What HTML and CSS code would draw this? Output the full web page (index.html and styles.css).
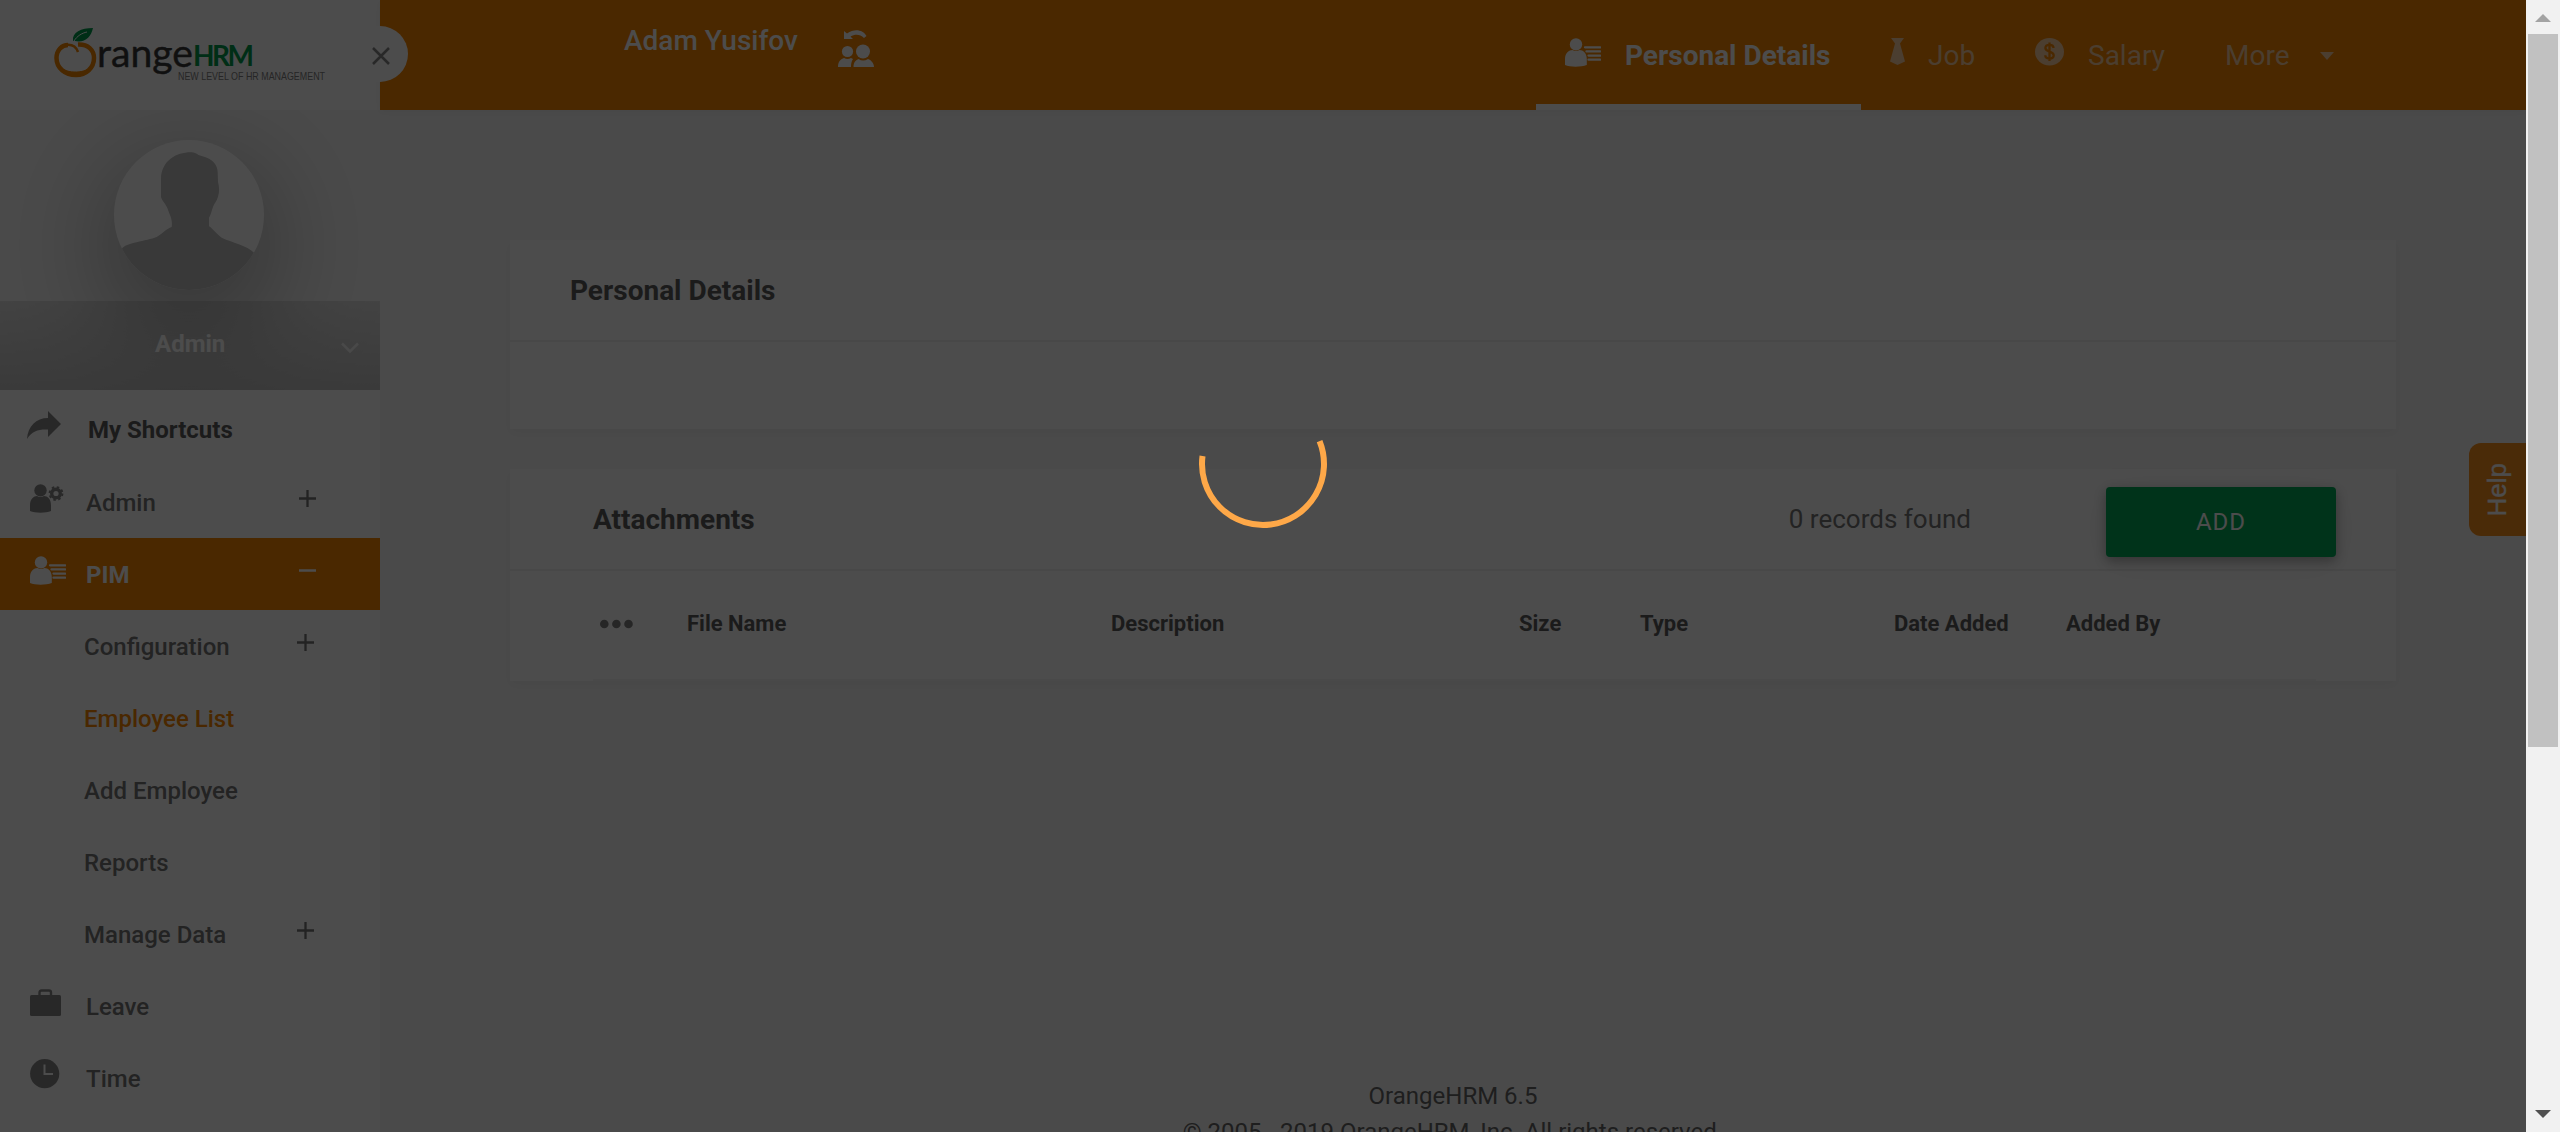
FILE: index.html
```html
<!DOCTYPE html>
<html lang="en">
<head>
<meta charset="utf-8">
<title>OrangeHRM</title>
<link rel="stylesheet" href="styles.css">
</head>
<body>
<svg width="0" height="0" class="defs">
  <defs>
    <symbol id="user-lines" viewBox="0 0 36 29">
      <circle cx="11" cy="6.4" r="6.2"/>
      <path d="M0 27V21C0 15 4 12 7.500 12C9.500 13.200 12.500 13.200 14.500 12C18 12 21.800 15 21.800 21V27C16 29.200 5 29.200 0 27Z"/>
      <path d="M20 9.300H35.200M21.500 13.400H35.200M23.500 17.600H35.200M23.500 21.700H35.200" fill="none" stroke="currentColor" stroke-width="2.300" stroke-linecap="round"/>
    </symbol>
    <symbol id="user-gear" viewBox="0 0 36 29">
      <circle cx="10.500" cy="6.400" r="6.200"/>
      <path d="M0 27V21C0 15 4 12 7 12C9 13.200 12 13.200 14 12C17.500 12 21 15 21 21V27C16 29.200 5 29.200 0 27Z"/>
      <circle cx="26" cy="9.500" r="4.300" fill="none" stroke="currentColor" stroke-width="3.400"/>
      <circle cx="26" cy="9.500" r="6.400" fill="none" stroke="currentColor" stroke-width="2" stroke-dasharray="2.500 2.526"/>
    </symbol>
    <symbol id="plus" viewBox="0 0 17 17"><path d="M0 8.500H17M8.500 0V17" fill="none" stroke="currentColor" stroke-width="2.300"/></symbol>
    <symbol id="minus" viewBox="0 0 17 17"><path d="M0 8.500H17" fill="none" stroke="currentColor" stroke-width="2.500"/></symbol>
  </defs>
</svg>
<div class="window">
  <div class="app">
    <aside class="sidebar">
      <div class="brand">
        <svg class="logo" width="276" height="60" viewBox="0 0 276 60">
          <path d="M24 16.500C34 16 40 22 40 30C40 40 32 47 22 47C11 47 2.500 40 2.500 30C2.500 22 8 17 14 17" fill="none" stroke="#f58500" stroke-width="4.500"/>
          <path d="M11 17C17 16 22 18 24 24" fill="none" stroke="#f58500" stroke-width="2.500"/>
          <path d="M5 38C12 51 32 50 38 38C34 45 12 47 5 38Z" fill="#f58500" stroke="#f58500"/>
          <path d="M19 13C18 4 27 0 39 0C37 9 31 15 21 13Z" fill="#009a4c"/>
          <path d="M20 13C23 8 28 5 33 4" fill="none" stroke="#fff" stroke-width="1"/>
          <text x="43" y="39" class="logo-name" textLength="96" lengthAdjust="spacingAndGlyphs">range</text>
          <text x="139" y="38" class="logo-hrm" textLength="61" lengthAdjust="spacing">HRM</text>
          <text x="124" y="52" class="logo-tag" textLength="147" lengthAdjust="spacingAndGlyphs">NEW LEVEL OF HR MANAGEMENT</text>
        </svg>
      </div>
      <div class="profile">
        <div class="photo">
          <svg width="150" height="150" viewBox="342 419 450 450"><path fill="#bebebe" d="M366 745C375 728 440 722 470 710C490 698 500 685 515 680C519 655 507 640 503 625C497 610 488 605 483 590V535C485 480 530 455 575 456C592 458 592 465 605 467C640 475 652 495 653 515L654 545C660 565 658 590 645 608C637 618 635 640 627 652V678C640 686 650 702 665 712C700 728 740 735 762 757V900H366Z"/></svg>
        </div>
        <div class="account">
          <span>Admin</span>
          <svg class="chevron" width="18" height="12" viewBox="0 0 18 12"><path d="M1 1.500L9 9.500L17 1.500" fill="none" stroke="#fff" stroke-width="2.600"/></svg>
        </div>
      </div>
      <nav class="menu">
        <a class="item shortcuts"><svg class="icon" width="34" height="28" viewBox="0 0 34 28"><path d="M0 28C1 15 9 7 21 7V0L34 13L21 26V18.500C12 18 5 20 0 28Z"/></svg><span>My Shortcuts</span></a>
        <a class="item"><svg class="icon" width="36" height="29"><use href="#user-gear"/></svg><span>Admin</span><svg class="toggle" width="17" height="17"><use href="#plus"/></svg></a>
        <a class="item active"><svg class="icon" width="36" height="29"><use href="#user-lines"/></svg><span>PIM</span><svg class="toggle" width="17" height="17"><use href="#minus"/></svg></a>
        <a class="item sub"><span>Configuration</span><svg class="toggle" width="17" height="17"><use href="#plus"/></svg></a>
        <a class="item sub current"><span>Employee List</span></a>
        <a class="item sub"><span>Add Employee</span></a>
        <a class="item sub"><span>Reports</span></a>
        <a class="item sub"><span>Manage Data</span><svg class="toggle" width="17" height="17"><use href="#plus"/></svg></a>
        <a class="item"><svg class="icon" width="31" height="27" viewBox="0 0 31 27"><rect y="6" width="31" height="21" rx="1.500"/><path d="M9.500 7V3.500Q9.500 1.500 11.500 1.500H19Q21 1.500 21 3.500V7" fill="none" stroke="currentColor" stroke-width="2.400"/></svg><span>Leave</span></a>
        <a class="item"><svg class="icon" width="30" height="30" viewBox="0 0 30 30"><circle cx="14.700" cy="14.700" r="14.600"/><path d="M14.500 5.500V15H23" fill="none" stroke="#fff" stroke-width="2"/></svg><span>Time</span></a>
      </nav>
    </aside>

    <div class="main">
      <header class="topbar">
        <div class="employee">Adam Yusifov</div>
        <svg class="switch" width="36" height="38" viewBox="0 0 36 38"><circle cx="9.500" cy="21.500" r="5.600"/><path d="M0 37C0 31 3 29 6 28Q9.500 30 13 28L15 29C13.500 31 13 34 13 37Z"/><circle cx="25" cy="21.500" r="7"/><path d="M15.500 37C15.500 32 18 30 20.500 29Q25 32 30 29C33 30 36 33 36 37Z"/><path d="M6 1L9 3.500C17-2 25 0 28.500 6L26 8C22 4 17 4 12.500 6.500L15 9H6Z"/></svg>
        <nav class="tabs">
          <a class="tab selected"><svg width="36" height="29"><use href="#user-lines"/></svg><span>Personal Details</span></a>
          <a class="tab job"><svg width="15" height="27" viewBox="0 0 15 27"><path d="M1 0H14L10 5.500L15 23.500L7.500 27L0 23.500L5 5.500Z"/></svg><span>Job</span></a>
          <a class="tab salary"><svg width="29" height="28" viewBox="0 0 29 28"><ellipse cx="14.500" cy="13.800" rx="14.500" ry="13.800"/><path d="M18.500 10C18.500 7.500 16.500 6.800 14.500 6.800C12 6.800 10.400 8 10.400 10C10.400 14.600 18.700 12.600 18.700 17.200C18.700 19.500 17 20.500 14.500 20.500C12 20.500 10.300 19.500 10.300 17.300M14.500 4.500V23" fill="none" stroke="#f78600" stroke-width="2.300"/></svg><span>Salary</span></a>
          <a class="tab more"><span>More</span><svg width="14" height="8" viewBox="0 0 14 8"><path d="M0 0H14L7 8Z"/></svg></a>
        </nav>
      </header>
      <main class="content">
        <section class="card">
          <h2 class="card-head">Personal Details</h2>
          <div class="card-body"></div>
        </section>
        <section class="card attachments">
          <div class="card-head">
            <h2>Attachments</h2>
            <span class="records">0 records found</span>
            <button class="add">ADD</button>
          </div>
          <div class="table-head">
            <svg width="34" height="10" viewBox="0 0 34 10"><circle cx="4.300" cy="5" r="4.300"/><circle cx="16.400" cy="5" r="4.300"/><circle cx="28.500" cy="5" r="4.300"/></svg>
            <span>File Name</span><span>Description</span><span>Size</span><span>Type</span><span>Date Added</span><span>Added By</span>
          </div>
        </section>
      </main>
      <footer class="footer">OrangeHRM 6.5<br>© 2005 - 2019 OrangeHRM, Inc. All rights reserved.</footer>
    </div>

    <button class="close"><svg width="18" height="18" viewBox="0 0 18 18"><path d="M1 1L17 17M17 1L1 17" fill="none" stroke="#888" stroke-width="2.500"/></svg></button>
    <div class="help"><span>Help</span></div>
    <div class="overlay">
      <svg width="128" height="128" viewBox="-64 -64 128 128"><path d="M-60.480 -8A61 61 0 1 0 56.560 -22.850" fill="none" stroke="#fea848" stroke-width="6"/></svg>
    </div>
  </div>
  <div class="scrollbar">
    <svg width="16" height="8" viewBox="0 0 16 8"><path d="M0 8H16L8 0Z" fill="#a3a3a3"/></svg>
    <div class="thumb"></div>
    <svg class="down" width="16" height="8" viewBox="0 0 16 8"><path d="M0 0H16L8 8Z" fill="#505050"/></svg>
  </div>
</div>
</body>
</html>
```
FILE: styles.css
```css
* { box-sizing: border-box; }
body { margin: 0; font-family: Roboto, "Liberation Sans", sans-serif; overflow: hidden; }
h2 { margin: 0; font: inherit; }
button { border: 0; padding: 0; font: inherit; }
svg { display: block; flex: none; fill: currentColor; overflow: visible; }
.defs { position: absolute; }

.window { display: flex; height: 1132px; overflow: hidden; }
.app { position: relative; display: flex; width: 2526px; height: 1132px; overflow: hidden; background: #f9f9f9; }

/* Sidebar */
.sidebar { width: 380px; height: 1132px; background: #fff; flex: none; }
.brand { height: 110px; padding: 28px 0 0 54px; }
.logo-name { font: 39px Lato, sans-serif; fill: #383838; stroke: #383838; stroke-width: .4; }
.logo-hrm { font: 700 28px Lato, sans-serif; fill: #009a4c; }
.logo-tag { font: 11.500px "Liberation Sans", sans-serif; fill: #808080; }
.profile { height: 280px; padding-top: 30px; overflow: hidden; background: #f9f9f9; }
.photo { width: 150px; height: 150px; margin: 0 auto 11px 114px; border-radius: 50%; background: #fff; box-shadow: 0 30px 120px rgba(0, 0, 0, .42); }
.photo svg { border-radius: 50%; overflow: hidden; }
.account { position: relative; display: flex; align-items: center; height: 89px; padding: 0 21px 3px 155px; background: linear-gradient(rgba(0, 0, 0, .1), rgba(0, 0, 0, .22)); color: #fff; font-weight: 700; font-size: 24px; }
.chevron { margin: 8px 0 0 auto; opacity: .75; }
.menu { color: #757575; font-size: 24px; font-weight: 500; }
.item { display: grid; grid-template-columns: 56px 1fr 17px; align-items: center; height: 72px; padding: 1px 64px 0 30px; }
.item > span { grid-column: 2; }
.icon { color: #888; margin-bottom: 9px; }
.toggle { margin-bottom: 8px; }
.item.shortcuts { height: 76px; padding: 3px 64px 0 27px; grid-template-columns: 61px 1fr 17px; color: #5d5d5d; font-weight: 700; }
.shortcuts .icon { margin-bottom: 10px; }
.item.active { background: #f78600; color: #fff; font-weight: 700; }
.active .icon { color: #fff; }
.item.sub { padding-right: 66px; grid-template-columns: 54px 1fr 17px; }
.item.current { color: #f78600; }

/* Header */
.main { width: 2146px; display: flex; flex-direction: column; flex: none; }
.topbar { display: flex; align-items: flex-start; height: 110px; background: #f78600; color: #fff; font-size: 28px; line-height: 34px; box-shadow: 0 2px 8px rgba(0, 0, 0, .06); }
.employee { margin: 24px 0 0 244px; width: 214px; font-weight: 500; }
.switch { margin-top: 30px; width: 36px; }
.tabs { display: flex; margin-left: 662px; color: #facfa2; }
.tab { display: flex; align-items: flex-start; height: 110px; padding-top: 38px; }
.tab span { padding-top: 1px; }
.tab svg { margin-right: 24px; }
.selected { width: 325px; padding-left: 29px; color: #fff; font-weight: 700; border-bottom: 6px solid #fff; }
.job { width: 174px; padding-left: 29px; }
.job svg { margin-right: 23px; }
.salary { width: 190px; }
.more svg { margin: 14px 0 0 30px; }

/* Cards */
.content { padding: 130px 130px 0; display: grid; gap: 40px; }
.card { background: #fff; box-shadow: 0 4px 10px rgba(0, 0, 0, .05); height: 189px; }
.card-head { display: flex; align-items: center; height: 102px; padding-left: 60px; border-bottom: 2px solid #f1f1f1; font-size: 28px; font-weight: 700; color: #5d5d5d; }
.attachments { height: 212px; }
.attachments .card-head { padding-left: 83px; padding-right: 60px; }
.records { margin: 0 135px 0 auto; color: #757575; font-size: 26px; font-weight: 400; }
.add { width: 230px; height: 70px; margin-top: 6px; border-radius: 4px; background: #00aa57; color: #fff; font-size: 24px; font-weight: 400; letter-spacing: 1px; box-shadow: 0 4px 12px rgba(0, 0, 0, .3), 0 6px 40px rgba(0, 0, 0, .06); }
.table-head { display: grid; grid-template-columns: 87px 424px 408px 121px 254px 172px 1fr; align-items: center; height: 110px; margin: 0 80px 0 83px; padding: 0 0 4px 7px; border-bottom: 2px solid #f3f3f3; color: #5d5d5d; font-size: 22px; font-weight: 700; }
.table-head svg { color: #808080; margin-top: 2px; }
.footer { margin-top: auto; height: 54px; text-align: center; color: #666; font-size: 24px; line-height: 36px; white-space: nowrap; }

/* Floating controls */
.close { position: absolute; left: 352px; top: 26px; width: 56px; height: 56px; border-radius: 50%; background: #fff; padding: 3px 0 0 20px; }
.help { position: absolute; right: 0; top: 443px; width: 57px; height: 93px; display: flex; align-items: center; justify-content: center; border-radius: 12px 0 0 12px; background: #f98f1c; color: #fff; font: 26px "Liberation Sans", sans-serif; -webkit-text-stroke: .4px #fff; }
.help span { writing-mode: vertical-rl; transform: rotate(180deg); }
.overlay { position: absolute; inset: 0; display: flex; justify-content: center; padding-top: 400px; background: rgba(0, 0, 0, .7); }

/* Window scrollbar */
.scrollbar { display: flex; flex-direction: column; align-items: center; width: 34px; height: 1132px; padding: 14px 0; background: #f1f1f1; }
.thumb { width: 30px; height: 713px; margin-top: 12px; background: #c1c1c1; }
.down { margin-top: auto; }
```
